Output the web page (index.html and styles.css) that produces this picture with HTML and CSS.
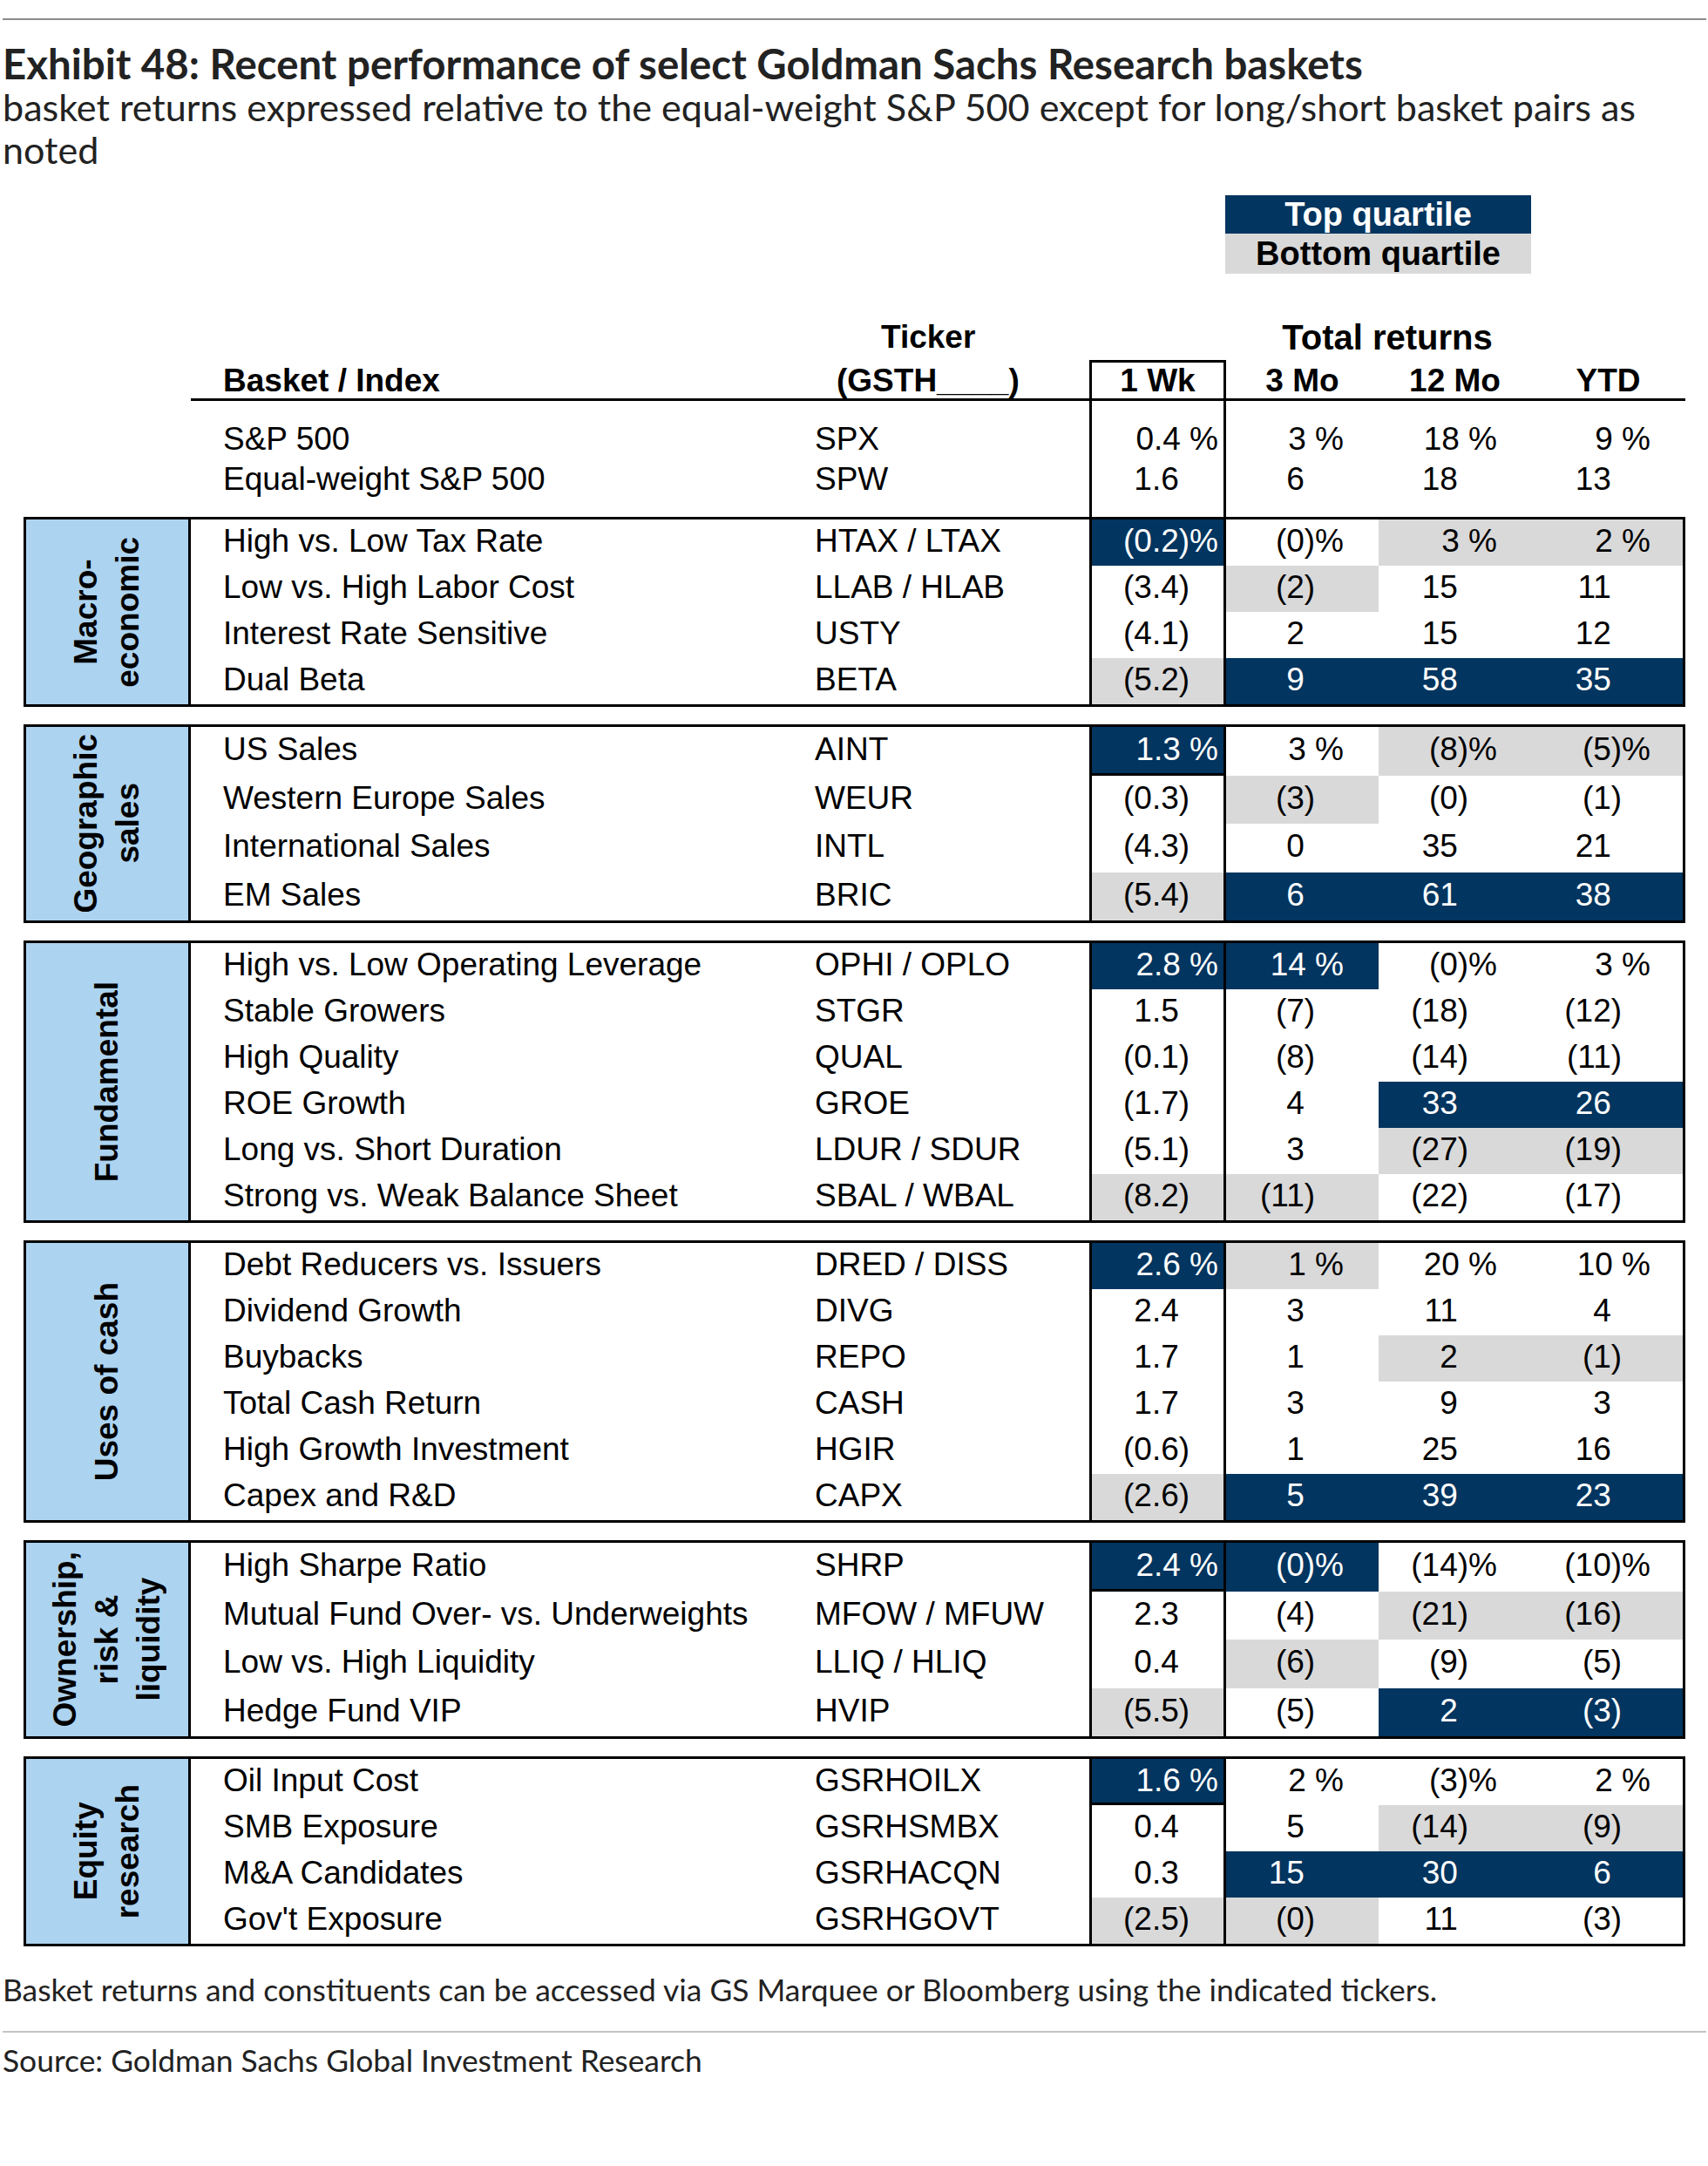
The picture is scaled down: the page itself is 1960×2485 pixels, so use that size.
FILE: index.html
```html
<!DOCTYPE html>
<html lang="en">
<head>
<meta charset="utf-8">
<title>Exhibit 48</title>
<link rel="stylesheet" href="styles.css">
</head>
<body>
<div class="page">
  <hr class="rule">
  <h1 class="title">Exhibit 48: Recent performance of select Goldman Sachs Research baskets</h1>
  <p class="subtitle">basket returns expressed relative to the equal-weight S&amp;P 500 except for long/short basket pairs as noted</p>

  <div class="exhibit">
    <div class="legend">
      <div class="lg-top">Top quartile</div>
      <div class="lg-bottom">Bottom quartile</div>
    </div>

    <div class="cols head1">
      <div class="h-ticker">Ticker</div>
      <div class="h-total">Total returns</div>
    </div>

    <div class="cols head2">
      <div class="blank"></div>
      <div class="name">Basket / Index</div>
      <div class="h-gsth">(GSTH____)</div>
      <div class="wk">1 Wk</div>
      <div class="ctr">3 Mo</div>
      <div class="ctr">12 Mo</div>
      <div class="ctr">YTD</div>
    </div>

    <div class="cols irow first">
      <div></div>
      <div class="name">S&amp;P 500</div>
      <div class="tk">SPX</div>
      <div class="v wk">0.4 %</div>
      <div class="v m3">3 %</div>
      <div class="v m12">18 %</div>
      <div class="v ytd">9 %</div>
    </div>
    <div class="cols irow last">
      <div></div>
      <div class="name">Equal-weight S&amp;P 500</div>
      <div class="tk">SPW</div>
      <div class="v wk"><span class="p">1.6</span></div>
      <div class="v m3"><span class="p">6</span></div>
      <div class="v m12"><span class="p">18</span></div>
      <div class="v ytd"><span class="p">13</span></div>
    </div>

    <!-- Macro-economic -->
    <div class="group first-group">
      <div class="cat"><span>Macro-<br>economic</span></div>
      <div class="rows">
        <div class="row">
          <div class="name">High vs. Low Tax Rate</div><div class="tk">HTAX / LTAX</div>
          <div class="v wk hi">(0.2)%</div><div class="v m3">(0)%</div><div class="v m12 lo">3 %</div><div class="v ytd lo">2 %</div>
        </div>
        <div class="row">
          <div class="name">Low vs. High Labor Cost</div><div class="tk">LLAB / HLAB</div>
          <div class="v wk"><span class="n">(3.4)</span></div><div class="v m3 lo"><span class="n">(2)</span></div><div class="v m12"><span class="p">15</span></div><div class="v ytd"><span class="p">11</span></div>
        </div>
        <div class="row">
          <div class="name">Interest Rate Sensitive</div><div class="tk">USTY</div>
          <div class="v wk"><span class="n">(4.1)</span></div><div class="v m3"><span class="p">2</span></div><div class="v m12"><span class="p">15</span></div><div class="v ytd"><span class="p">12</span></div>
        </div>
        <div class="row">
          <div class="name">Dual Beta</div><div class="tk">BETA</div>
          <div class="v wk lo"><span class="n">(5.2)</span></div><div class="v m3 hi"><span class="p">9</span></div><div class="v m12 hi"><span class="p">58</span></div><div class="v ytd hi"><span class="p">35</span></div>
        </div>
      </div>
    </div>

    <!-- Geographic sales -->
    <div class="group tall">
      <div class="cat"><span>Geographic<br>sales</span></div>
      <div class="rows">
        <div class="row">
          <div class="name">US Sales</div><div class="tk">AINT</div>
          <div class="v wk hi u">1.3 %</div><div class="v m3">3 %</div><div class="v m12 lo">(8)%</div><div class="v ytd lo">(5)%</div>
        </div>
        <div class="row">
          <div class="name">Western Europe Sales</div><div class="tk">WEUR</div>
          <div class="v wk"><span class="n">(0.3)</span></div><div class="v m3 lo"><span class="n">(3)</span></div><div class="v m12"><span class="n">(0)</span></div><div class="v ytd"><span class="n">(1)</span></div>
        </div>
        <div class="row">
          <div class="name">International Sales</div><div class="tk">INTL</div>
          <div class="v wk"><span class="n">(4.3)</span></div><div class="v m3"><span class="p">0</span></div><div class="v m12"><span class="p">35</span></div><div class="v ytd"><span class="p">21</span></div>
        </div>
        <div class="row">
          <div class="name">EM Sales</div><div class="tk">BRIC</div>
          <div class="v wk lo"><span class="n">(5.4)</span></div><div class="v m3 hi"><span class="p">6</span></div><div class="v m12 hi"><span class="p">61</span></div><div class="v ytd hi"><span class="p">38</span></div>
        </div>
      </div>
    </div>

    <!-- Fundamental -->
    <div class="group">
      <div class="cat"><span>Fundamental</span></div>
      <div class="rows">
        <div class="row">
          <div class="name">High vs. Low Operating Leverage</div><div class="tk">OPHI / OPLO</div>
          <div class="v wk hi">2.8 %</div><div class="v m3 hi">14 %</div><div class="v m12">(0)%</div><div class="v ytd">3 %</div>
        </div>
        <div class="row">
          <div class="name">Stable Growers</div><div class="tk">STGR</div>
          <div class="v wk"><span class="p">1.5</span></div><div class="v m3"><span class="n">(7)</span></div><div class="v m12"><span class="n">(18)</span></div><div class="v ytd"><span class="n">(12)</span></div>
        </div>
        <div class="row">
          <div class="name">High Quality</div><div class="tk">QUAL</div>
          <div class="v wk"><span class="n">(0.1)</span></div><div class="v m3"><span class="n">(8)</span></div><div class="v m12"><span class="n">(14)</span></div><div class="v ytd"><span class="n">(11)</span></div>
        </div>
        <div class="row">
          <div class="name">ROE Growth</div><div class="tk">GROE</div>
          <div class="v wk"><span class="n">(1.7)</span></div><div class="v m3"><span class="p">4</span></div><div class="v m12 hi"><span class="p">33</span></div><div class="v ytd hi"><span class="p">26</span></div>
        </div>
        <div class="row">
          <div class="name">Long vs. Short Duration</div><div class="tk">LDUR / SDUR</div>
          <div class="v wk"><span class="n">(5.1)</span></div><div class="v m3"><span class="p">3</span></div><div class="v m12 lo"><span class="n">(27)</span></div><div class="v ytd lo"><span class="n">(19)</span></div>
        </div>
        <div class="row">
          <div class="name">Strong vs. Weak Balance Sheet</div><div class="tk">SBAL / WBAL</div>
          <div class="v wk lo"><span class="n">(8.2)</span></div><div class="v m3 lo"><span class="n">(11)</span></div><div class="v m12"><span class="n">(22)</span></div><div class="v ytd"><span class="n">(17)</span></div>
        </div>
      </div>
    </div>

    <!-- Uses of cash -->
    <div class="group">
      <div class="cat"><span>Uses of cash</span></div>
      <div class="rows">
        <div class="row">
          <div class="name">Debt Reducers vs. Issuers</div><div class="tk">DRED / DISS</div>
          <div class="v wk hi">2.6 %</div><div class="v m3 lo">1 %</div><div class="v m12">20 %</div><div class="v ytd">10 %</div>
        </div>
        <div class="row">
          <div class="name">Dividend Growth</div><div class="tk">DIVG</div>
          <div class="v wk"><span class="p">2.4</span></div><div class="v m3"><span class="p">3</span></div><div class="v m12"><span class="p">11</span></div><div class="v ytd"><span class="p">4</span></div>
        </div>
        <div class="row">
          <div class="name">Buybacks</div><div class="tk">REPO</div>
          <div class="v wk"><span class="p">1.7</span></div><div class="v m3"><span class="p">1</span></div><div class="v m12 lo"><span class="p">2</span></div><div class="v ytd lo"><span class="n">(1)</span></div>
        </div>
        <div class="row">
          <div class="name">Total Cash Return</div><div class="tk">CASH</div>
          <div class="v wk"><span class="p">1.7</span></div><div class="v m3"><span class="p">3</span></div><div class="v m12"><span class="p">9</span></div><div class="v ytd"><span class="p">3</span></div>
        </div>
        <div class="row">
          <div class="name">High Growth Investment</div><div class="tk">HGIR</div>
          <div class="v wk"><span class="n">(0.6)</span></div><div class="v m3"><span class="p">1</span></div><div class="v m12"><span class="p">25</span></div><div class="v ytd"><span class="p">16</span></div>
        </div>
        <div class="row">
          <div class="name">Capex and R&amp;D</div><div class="tk">CAPX</div>
          <div class="v wk lo"><span class="n">(2.6)</span></div><div class="v m3 hi"><span class="p">5</span></div><div class="v m12 hi"><span class="p">39</span></div><div class="v ytd hi"><span class="p">23</span></div>
        </div>
      </div>
    </div>

    <!-- Ownership, risk & liquidity -->
    <div class="group tall">
      <div class="cat"><span>Ownership,<br>risk &amp;<br>liquidity</span></div>
      <div class="rows">
        <div class="row">
          <div class="name">High Sharpe Ratio</div><div class="tk">SHRP</div>
          <div class="v wk hi u">2.4 %</div><div class="v m3 hi">(0)%</div><div class="v m12">(14)%</div><div class="v ytd">(10)%</div>
        </div>
        <div class="row">
          <div class="name">Mutual Fund Over- vs. Underweights</div><div class="tk">MFOW / MFUW</div>
          <div class="v wk"><span class="p">2.3</span></div><div class="v m3"><span class="n">(4)</span></div><div class="v m12 lo"><span class="n">(21)</span></div><div class="v ytd lo"><span class="n">(16)</span></div>
        </div>
        <div class="row">
          <div class="name">Low vs. High Liquidity</div><div class="tk">LLIQ / HLIQ</div>
          <div class="v wk"><span class="p">0.4</span></div><div class="v m3 lo"><span class="n">(6)</span></div><div class="v m12"><span class="n">(9)</span></div><div class="v ytd"><span class="n">(5)</span></div>
        </div>
        <div class="row">
          <div class="name">Hedge Fund VIP</div><div class="tk">HVIP</div>
          <div class="v wk lo"><span class="n">(5.5)</span></div><div class="v m3"><span class="n">(5)</span></div><div class="v m12 hi"><span class="p">2</span></div><div class="v ytd hi"><span class="n">(3)</span></div>
        </div>
      </div>
    </div>

    <!-- Equity research -->
    <div class="group">
      <div class="cat"><span>Equity<br>research</span></div>
      <div class="rows">
        <div class="row">
          <div class="name">Oil Input Cost</div><div class="tk">GSRHOILX</div>
          <div class="v wk hi u">1.6 %</div><div class="v m3">2 %</div><div class="v m12">(3)%</div><div class="v ytd">2 %</div>
        </div>
        <div class="row">
          <div class="name">SMB Exposure</div><div class="tk">GSRHSMBX</div>
          <div class="v wk"><span class="p">0.4</span></div><div class="v m3"><span class="p">5</span></div><div class="v m12 lo"><span class="n">(14)</span></div><div class="v ytd lo"><span class="n">(9)</span></div>
        </div>
        <div class="row">
          <div class="name">M&amp;A Candidates</div><div class="tk">GSRHACQN</div>
          <div class="v wk"><span class="p">0.3</span></div><div class="v m3 hi"><span class="p">15</span></div><div class="v m12 hi"><span class="p">30</span></div><div class="v ytd hi"><span class="p">6</span></div>
        </div>
        <div class="row">
          <div class="name">Gov't Exposure</div><div class="tk">GSRHGOVT</div>
          <div class="v wk lo"><span class="n">(2.5)</span></div><div class="v m3 lo"><span class="n">(0)</span></div><div class="v m12"><span class="p">11</span></div><div class="v ytd"><span class="n">(3)</span></div>
        </div>
      </div>
    </div>
  </div>

  <p class="note">Basket returns and constituents can be accessed via GS Marquee or Bloomberg using the indicated tickers.</p>
  <hr class="sep">
  <p class="source">Source: Goldman Sachs Global Investment Research</p>
</div>
</body>
</html>
```

FILE: styles.css
```css
* { box-sizing: border-box; }

body {
  margin: 0;
  background: #ffffff;
}

.page {
  width: 1960px;
  padding: 21px 2px 0 3px;
  font-family: Lato, "Open Sans", sans-serif;
  color: #222222;
}

.rule {
  margin: 0;
  border: 0;
  border-top: 2px solid #8c8c8c;
  height: 0;
}

.title {
  margin: 24px 0 0 0;
  font-size: 47.4px;
  font-weight: 700;
  line-height: 51px;
}

.subtitle {
  margin: 0;
  max-width: 1900px;
  font-size: 43.1px;
  line-height: 49px;
}

/* ---------- exhibit table ---------- */
.exhibit {
  margin-left: 24px;
  width: 1907px;
  font-family: "Liberation Sans", Arial, sans-serif;
  font-size: 37px;
  color: #000000;
}

.legend {
  margin: 28px 0 0 1379px;
  width: 351px;
  font-size: 38px;
  font-weight: 700;
  text-align: center;
}

.lg-top {
  height: 44px;
  line-height: 44px;
  background: #02355f;
  color: #ffffff;
}

.lg-bottom {
  height: 46px;
  line-height: 46px;
  background: #d9d9d9;
}

.cols {
  display: grid;
  grid-template-columns: 192px 716px 315px 157px 175px 175px 177px;
}

.head1 {
  height: 99px;
  align-items: end;
  font-weight: 700;
  line-height: 44px;
}

.h-ticker {
  grid-column: 3;
  padding: 0 0 4px 76px;
}

.h-total {
  grid-column: 4 / 8;
  padding-bottom: 4px;
  font-size: 40px;
  text-align: center;
}

.head2 {
  font-weight: 700;
  line-height: 41px;
}

.head2 > div {
  border-top: 3px solid transparent;
  border-bottom: 3px solid #000000;
  white-space: nowrap;
}

.head2 > .blank {
  border-bottom-color: transparent;
}

.head2 > .wk {
  border-top-color: #000000;
  text-align: center;
  padding-right: 0;
}

.h-gsth {
  padding-left: 25px;
}

.ctr {
  text-align: center;
}

.irow {
  line-height: 46px;
}

.irow.first > div { padding-top: 21px; }
.irow.last > div { padding-bottom: 20px; }

/* ---------- groups ---------- */
.group {
  display: flex;
  margin-top: 20px;
  border: 3px solid #000000;
}

.group.first-group {
  margin-top: 0;
}

.cat {
  flex: none;
  width: 189px;
  display: flex;
  align-items: center;
  justify-content: center;
  border-right: 3px solid #000000;
  background: #acd3f0;
}

.cat span {
  writing-mode: vertical-rl;
  transform: rotate(180deg);
  font-weight: 700;
  font-size: 37px;
  line-height: 48px;
  text-align: center;
  white-space: nowrap;
}

.rows {
  flex: 1;
}

.row {
  display: grid;
  grid-template-columns: 716px 315px 157px 175px 175px 174px;
  height: 53px;
  line-height: 49px;
}

.group.tall .row {
  height: 55.5px;
  line-height: 52px;
}

/* ---------- cells ---------- */
.name {
  padding-left: 37px;
  white-space: nowrap;
}

.tk {
  white-space: nowrap;
}

.v {
  text-align: right;
  white-space: nowrap;
}

.wk {
  border-left: 3px solid #000000;
  border-right: 3px solid #000000;
  padding-right: 6px;
}

.m3 { padding-right: 40px; }
.m12 { padding-right: 39px; }
.row .ytd { padding-right: 37px; }
.cols .ytd { padding-right: 40px; }

.p { padding-right: 1.222em; }
.n { padding-right: 0.889em; }

.hi {
  background: #02355f;
  color: #ffffff;
}

.lo {
  background: #d9d9d9;
}

.u {
  box-shadow: inset 0 -3px 0 #000000;
}

/* ---------- footer ---------- */
.note {
  margin: 30px 0 0 0;
  font-size: 35.4px;
  line-height: 40px;
}

.sep {
  margin: 27px 0 0 0;
  border: 0;
  border-top: 2px solid #c4c4c4;
  height: 0;
}

.source {
  margin: 12px 0 0 0;
  font-size: 35.4px;
  line-height: 40px;
}
```
